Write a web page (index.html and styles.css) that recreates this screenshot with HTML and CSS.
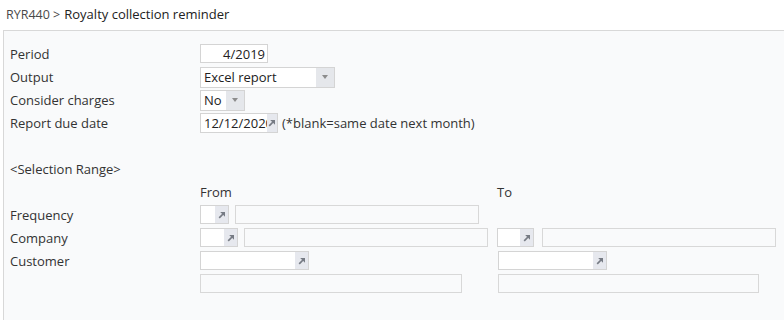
FILE: index.html
```html
<!DOCTYPE html>
<html lang="en">
<head>
    <meta charset="UTF-8">
    <title>RYR440 - Royalty collection reminder</title>
    <link rel="stylesheet" href="styles.css">
</head>
<body>

    <div class="page-title">
        <span class="prog-code">RYR440 &gt;</span>
        <span class="prog-name">Royalty collection reminder</span>
    </div>

    <div class="panel">
        <!-- 报表参数 -->
        <div class="row">
            <div class="lbl">Period</div>
            <input class="field num w-period" type="text" value="4/2019">
        </div>
        <div class="row">
            <div class="lbl">Output</div>
            <div class="select w-output">
                <span class="select-text">Excel report</span>
                <span class="select-btn"><span class="caret"></span></span>
            </div>
        </div>
        <div class="row">
            <div class="lbl">Consider charges</div>
            <div class="select w-yesno">
                <span class="select-text">No</span>
                <span class="select-btn"><span class="caret"></span></span>
            </div>
        </div>
        <div class="row">
            <div class="lbl">Report due date</div>
            <div class="lookup w-date">
                <input class="lookup-input" type="text" value="12/12/2020">
                <span class="lookup-btn narrow"><svg width="8" height="8" viewBox="0 0 8 8"><path d="M1.2 6.8 L5 3" stroke="#767b84" stroke-width="1.7"/><polygon points="2.2,1 7,1 7,5.8" fill="#767b84"/></svg></span>
            </div>
            <span class="hint">(*blank=same date next month)</span>
        </div>
        <div class="row"></div>

        <!-- 选择范围 -->
        <div class="row">
            <div class="lbl">&lt;Selection Range&gt;</div>
        </div>
        <div class="range-row">
            <div class="lbl"></div>
            <div class="col-from">From</div>
            <div class="col-to">To</div>
        </div>
        <div class="range-row">
            <div class="lbl">Frequency</div>
            <div class="col-from">
                <div class="lookup w-freq">
                    <input class="lookup-input" type="text">
                    <span class="lookup-btn"><svg width="8" height="8" viewBox="0 0 8 8"><path d="M1.2 6.8 L5 3" stroke="#767b84" stroke-width="1.7"/><polygon points="2.2,1 7,1 7,5.8" fill="#767b84"/></svg></span>
                </div>
                <div class="desc w-desc"></div>
            </div>
            <div class="col-to"></div>
        </div>
        <div class="range-row">
            <div class="lbl">Company</div>
            <div class="col-from">
                <div class="lookup w-comp">
                    <input class="lookup-input" type="text">
                    <span class="lookup-btn"><svg width="8" height="8" viewBox="0 0 8 8"><path d="M1.2 6.8 L5 3" stroke="#767b84" stroke-width="1.7"/><polygon points="2.2,1 7,1 7,5.8" fill="#767b84"/></svg></span>
                </div>
                <div class="desc w-desc"></div>
            </div>
            <div class="col-to wide-gap">
                <div class="lookup w-comp-to">
                    <input class="lookup-input" type="text">
                    <span class="lookup-btn"><svg width="8" height="8" viewBox="0 0 8 8"><path d="M1.2 6.8 L5 3" stroke="#767b84" stroke-width="1.7"/><polygon points="2.2,1 7,1 7,5.8" fill="#767b84"/></svg></span>
                </div>
                <div class="desc w-desc-to"></div>
            </div>
        </div>
        <div class="range-row">
            <div class="lbl">Customer</div>
            <div class="col-from">
                <div class="lookup w-cust">
                    <input class="lookup-input" type="text">
                    <span class="lookup-btn"><svg width="8" height="8" viewBox="0 0 8 8"><path d="M1.2 6.8 L5 3" stroke="#767b84" stroke-width="1.7"/><polygon points="2.2,1 7,1 7,5.8" fill="#767b84"/></svg></span>
                </div>
            </div>
            <div class="col-to shift">
                <div class="lookup w-cust">
                    <input class="lookup-input" type="text">
                    <span class="lookup-btn"><svg width="8" height="8" viewBox="0 0 8 8"><path d="M1.2 6.8 L5 3" stroke="#767b84" stroke-width="1.7"/><polygon points="2.2,1 7,1 7,5.8" fill="#767b84"/></svg></span>
                </div>
            </div>
        </div>
        <div class="range-row">
            <div class="lbl"></div>
            <div class="col-from">
                <div class="desc w-name"></div>
            </div>
            <div class="col-to shift">
                <div class="desc w-name-to"></div>
            </div>
        </div>
    </div>

</body>
</html>
```

FILE: styles.css
```css
/* 页面基础 */
body {
    margin: 0;
    background: #fff;
    font-family: "Open Sans", "Liberation Sans", Arial, sans-serif;
    font-size: 13px;
    color: #333;
    height: 320px;
    overflow: hidden;
}

/* 标题栏 */
.page-title {
    height: 30px;
    padding-left: 6px;
    display: flex;
    align-items: center;
    gap: 4px;
    box-sizing: border-box;
    padding-bottom: 2px;
}

.prog-code {
    color: #4a4a4a;
    font-size: 12.5px;
}

.prog-name {
    color: #222;
    font-size: 13px;
}

/* 内容面板 */
.panel {
    margin-left: 3px;
    border-top: 1px solid #d8d8d8;
    border-left: 1px solid #d8d8d8;
    background: #f9fafb;
    height: 290px;
    box-sizing: border-box;
    padding: 11px 0 0 6px;
}

/* 行 */
.row,
.range-row {
    height: 23px;
    display: flex;
    align-items: center;
}

.lbl {
    width: 190px;
    flex-shrink: 0;
    color: #333;
}

.col-from {
    width: 297px;
    flex-shrink: 0;
    display: flex;
    align-items: center;
    gap: 6px;
}

.col-to {
    display: flex;
    align-items: center;
    gap: 6px;
}

.col-to.wide-gap {
    gap: 8px;
}

.col-to.shift {
    margin-left: 1px;
}

/* 输入框 */
.field {
    height: 19px;
    box-sizing: border-box;
    border: 1px solid #d4d4d4;
    background: #fff;
    font-family: inherit;
    font-size: 13px;
    color: #222;
    padding: 0 2px;
    margin: 0;
    outline: none;
}

.field.num {
    text-align: right;
}

.w-period { width: 68px; }

/* 下拉框 */
.select {
    height: 21px;
    box-sizing: border-box;
    border: 1px solid #d4d4d4;
    background: #fff;
    display: flex;
    align-items: stretch;
    margin-top: 1px;
}

.select-text {
    flex: 1;
    padding-left: 3px;
    line-height: 19px;
    color: #222;
    font-size: 13px;
}

.select-btn {
    width: 18px;
    background: #e5e7eb;
    display: flex;
    align-items: center;
    justify-content: center;
}

.caret {
    width: 0;
    height: 0;
    border-left: 3px solid transparent;
    border-right: 3px solid transparent;
    border-top: 4px solid #8c8c8c;
}

.w-output { width: 135px; }
.w-yesno { width: 45px; }

/* 查找框 */
.lookup {
    height: 19px;
    box-sizing: border-box;
    border: 1px solid #d4d4d4;
    background: #fff;
    display: flex;
    align-items: stretch;
}

.lookup-input {
    flex: 1;
    min-width: 0;
    border: none;
    outline: none;
    background: transparent;
    font-family: inherit;
    font-size: 13px;
    color: #222;
    padding: 0 0 0 3px;
    margin: 0;
}

.lookup-btn {
    width: 13px;
    background: #e6e8ee;
    display: flex;
    align-items: center;
    justify-content: center;
}

.lookup-btn.narrow {
    width: 10px;
}

.w-date { width: 78px; height: 20px; margin-top: 1px; }
.w-freq { width: 29px; }
.w-comp { width: 38px; }
.w-comp-to { width: 37px; }
.w-cust { width: 109px; }

.hint {
    margin-left: 4px;
    color: #333;
    font-size: 13px;
}

/* 描述框 */
.desc {
    height: 19px;
    box-sizing: border-box;
    border: 1px solid #d8d8d8;
    background: #f9fafb;
}

.w-desc { width: 244px; }
.w-desc-to { width: 234px; }
.w-name { width: 262px; }
.w-name-to { width: 261px; }
```
